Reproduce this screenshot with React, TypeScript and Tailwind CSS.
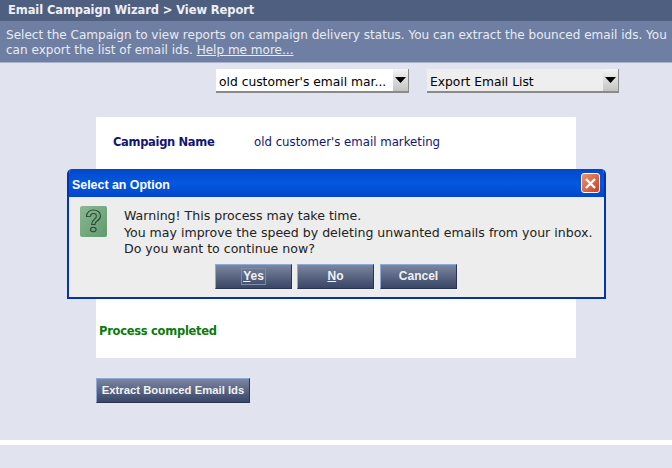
//components
const verdana = "font-['DejaVu_Sans',sans-serif]";
const arial = "font-['Liberation_Sans',sans-serif]";

const Arrow = () => (
  <span className="flex h-full w-[15px] items-center justify-center bg-gradient-to-b from-[#f4f4f4] to-[#c4c4c4]">
    <svg width="11" height="6" viewBox="0 0 11 6"><path d="M0 0h11L5.5 6z" fill="#000" /></svg>
  </span>
);

const Select = ({ label, className, bg }: { label: string, className: string, bg: string }) => (
  <div className={`flex h-[24px] items-center justify-between border-b-2 border-r border-[#8a8a8a] pl-[3px] text-[12.3px] text-black ${bg} ${className}`}>
    <span className="whitespace-nowrap pt-[4px]">{label}</span>
    <Arrow />
  </div>
);

const DialogButton = ({ label, mnemonic, focus, className }: { label: string, mnemonic?: string, focus?: boolean, className: string }) => (
  <button type="button" className={`flex h-[25px] items-center justify-center border border-t-[#8fa8d8] border-l-[#8fa8d8] border-r-[#2a3350] border-b-[#2a3350] bg-gradient-to-b from-[#7b86a2] to-[#3a4665] text-[12px] font-bold text-[#f2f2f2] ${arial} ${className}`}>
    <span className={focus ? 'border border-[#7f8aa6] px-[1px] leading-[15px]' : ''}>
      {mnemonic ? (<><span className="underline">{mnemonic}</span>{label.slice(1)}</>) : label}
    </span>
  </button>
);

const Dialog = () => (
  <div className="absolute left-[67px] top-[169px] flex h-[130px] w-[539px] flex-col overflow-hidden rounded-t-[5px] border-2 border-t-0 border-[#0334a8] bg-[#ededed]">
    <div className="flex h-[28px] shrink-0 items-center justify-between bg-gradient-to-b from-[#0347c8] via-[#0558e0] to-[#0346cc] pl-[3px] pr-[4px]">
      <span className={`pt-[4px] text-[12.4px] font-bold text-white ${arial}`}>Select an Option</span>
      <span className="flex h-[20px] w-[19px] items-center justify-center rounded-[3px] border border-white bg-gradient-to-br from-[#f0906c] to-[#c8401c]">
        <svg width="13" height="13" viewBox="0 0 13 13"><path d="M2 2l9 9M11 2l-9 9" stroke="#fff" strokeWidth="2.4" /></svg>
      </span>
    </div>
    <div className="flex flex-1 flex-col px-[11px] pt-[10px]">
      <div className="flex">
        <div className="mt-[-1px] flex h-[31px] w-[27px] shrink-0 items-center justify-center rounded-[2px] bg-gradient-to-br from-[#8cb894] to-[#5f9a6c]">
          <svg width="17" height="25" viewBox="0 0 17 25" fill="none" stroke="#2c4a34" strokeWidth="1.1">
            <path d="M1.5 7.5C1.5 3 5 1 8.5 1s7 2 7 6c0 2.6-1.7 4-3.6 5.2-1.3.8-1.9 1.6-1.9 3.3H6.6c0-2.6.9-3.8 2.6-5 1.2-.8 2.2-1.8 2.2-3.4 0-1.6-1.2-2.6-2.9-2.6-1.8 0-3 1.1-3 2.8z" />
            <ellipse cx="8.3" cy="20.5" rx="2.8" ry="2.2" />
          </svg>
        </div>
        <div className={`ml-[17px] pt-[1px] text-[12.55px] leading-[16.5px] text-[#222] ${verdana}`}>
          <p>Warning! This process may take time.</p>
          <p className="whitespace-nowrap">You may improve the speed by deleting unwanted emails from your inbox.</p>
          <p>Do you want to continue now?</p>
        </div>
      </div>
      <div className="mt-[6px] flex pl-[135px]">
        <DialogButton label="Yes" mnemonic="Y" focus className="w-[77px]" />
        <DialogButton label="No" mnemonic="N" className="ml-[5px] w-[77px]" />
        <DialogButton label="Cancel" className="ml-[6px] w-[77px]" />
      </div>
    </div>
  </div>
);

const App = () => {
  //render
  return (
    <main className={`relative flex h-[468px] w-[672px] flex-col overflow-hidden bg-[#e1e4ee] ${verdana}`}>
      <div className="flex h-[21px] shrink-0 items-center bg-[#4f5f80] pl-[8px] pt-[1px] text-[11.5px] font-bold tracking-[-0.1px] text-[#eef0f5]">
        Email Campaign Wizard &gt; View Report
      </div>
      <div className="h-[42px] shrink-0 border-b border-[#a8b2c8] bg-[#6f7fa3] pl-[6px] pt-[7px] text-[12.04px] leading-[15px] text-[#e8ebf2]">
        <p className="whitespace-nowrap">Select the Campaign to view reports on campaign delivery status. You can extract the bounced email ids. You</p>
        <p>can export the list of email ids. <span className="underline">Help me more...</span></p>
      </div>
      <div className="mt-[6px] flex pl-[216px]">
        <Select label="old customer's email mar..." className="w-[193px]" bg="bg-white" />
        <Select label="Export Email List" className="ml-[18px] w-[192px]" bg="bg-[#eeeeee]" />
      </div>
      <section className="ml-[96px] mt-[24px] flex h-[241px] w-[480px] flex-col bg-white pl-[3px]">
        <div className="mt-[16px] flex items-center pl-[14px] leading-[18px] text-[#14146e]">
          <span className="w-[141px] text-[11.5px] font-bold tracking-[-0.33px]">Campaign Name</span>
          <span className="text-[11.75px]">old customer's email marketing</span>
        </div>
        <div className="mt-[171px] text-[11.5px] font-bold leading-[18px] tracking-[-0.28px] text-[#0a7a0a]">Process completed</div>
      </section>
      <div className="ml-[96px] mt-[19px]">
        <button type="button" className={`h-[25px] w-[154px] whitespace-nowrap border border-t-[#8fa8d8] border-l-[#8fa8d8] border-r-[#2a3350] border-b-[#2a3350] bg-gradient-to-b from-[#7b86a2] to-[#3a4665] pb-[1px] text-[11.3px] font-bold text-[#f2f2f2] ${arial}`}>
          Extract Bounced Email Ids
        </button>
      </div>
      <div className="mt-[37px] h-[5px] bg-white" />
      <Dialog />
    </main>
  );
}

export default App;
